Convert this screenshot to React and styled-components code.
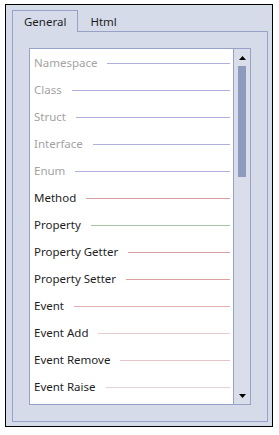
import { createGlobalStyle, styled } from "styled-components"

const GlobalStyle = createGlobalStyle`
    body{
        margin: 0;
        background: #fff;
        font-family: "Noto Sans", "Liberation Sans", sans-serif;
        font-size: 11.5px;
    }
`

const border = '#97a2c6'

const Frame = styled.div`
    margin: 4px 0 0 5px;
    width: 268px;
    height: 423px;
    box-sizing: border-box;
    border: 1px solid #000;
    background: #d6dbe9;
    padding: 5px 4px 4px 6px;
    display: flex;
    flex-direction: column;
`
const TabStrip = styled.div`
    display: flex;
    height: 21px;
`
const Tab = styled.div`
    height: ${p => p.$active ? '22px' : '21px'};
    box-sizing: border-box;
    padding: 0 11px;
    display: flex;
    align-items: center;
    color: #1e1e1e;
    background: #d6dbe9;
    border: 1px solid ${p => p.$active ? border : 'transparent'};
    border-bottom: none;
    position: relative;
    z-index: 1;
`
const Panel = styled.div`
    flex: 1;
    border: 1px solid ${border};
    padding: 16px;
    display: flex;
    min-height: 0;
`
const ListBox = styled.div`
    flex: 1;
    border: 1px solid ${border};
    background: #fff;
    display: flex;
    min-height: 0;
`
const List = styled.div`
    flex: 1;
    padding: 0 3px 0 4px;
    overflow: hidden;
`
const Row = styled.div`
    height: 27px;
    display: flex;
    align-items: center;
    gap: 10px;
`
const Label = styled.span`
    color: ${p => p.$dim ? '#a3a3a3' : '#1e1e1e'};
    white-space: nowrap;
`
const Rule = styled.div`
    flex: 1;
    height: 1px;
    align-self: flex-start;
    margin-top: 14px;
    background: ${p => p.$color};
`
const ScrollBar = styled.div`
    width: 16px;
    border-left: 1px solid ${border};
    background: #d9deea;
    display: flex;
    flex-direction: column;
    align-items: center;
`
const Arrow = styled.div`
    height: 17px;
    display: flex;
    align-items: center;
    justify-content: center;
`
const Thumb = styled.div`
    width: 8px;
    height: 111px;
    background: #8f9bbe;
`
const Spacer = styled.div`
    flex: 1;
`

const items = [
    { name: 'Namespace', color: '#b0b0da', dim: true },
    { name: 'Class', color: '#b0b0da', dim: true },
    { name: 'Struct', color: '#b0b0da', dim: true },
    { name: 'Interface', color: '#b0b0da', dim: true },
    { name: 'Enum', color: '#b0b0da', dim: true },
    { name: 'Method', color: '#d9a0a0' },
    { name: 'Property', color: '#a4c4a4' },
    { name: 'Property Getter', color: '#d9a0a0' },
    { name: 'Property Setter', color: '#d9a0a0' },
    { name: 'Event', color: '#e2b0b0' },
    { name: 'Event Add', color: '#e6cccc' },
    { name: 'Event Remove', color: '#e6c4c8' },
    { name: 'Event Raise', color: '#e4d2d6' },
]

function Triangle({ up }) {
    return (
        <svg width="7" height="4" viewBox="0 0 7 4">
            <path d={up ? 'M0 4 L3.5 0 L7 4 Z' : 'M0 0 L3.5 4 L7 0 Z'} fill="#000" />
        </svg>
    )
}

export default function App() {
    return (
        <>
            <GlobalStyle />
            <Frame>
                <TabStrip>
                    <Tab $active>General</Tab>
                    <Tab>Html</Tab>
                </TabStrip>
                <Panel>
                    <ListBox>
                        <List>
                            {items.map(it => (
                                <Row key={it.name}>
                                    <Label $dim={it.dim}>{it.name}</Label>
                                    <Rule $color={it.color} />
                                </Row>
                            ))}
                        </List>
                        <ScrollBar>
                            <Arrow><Triangle up /></Arrow>
                            <Thumb />
                            <Spacer />
                            <Arrow><Triangle /></Arrow>
                        </ScrollBar>
                    </ListBox>
                </Panel>
            </Frame>
        </>
    )
}
